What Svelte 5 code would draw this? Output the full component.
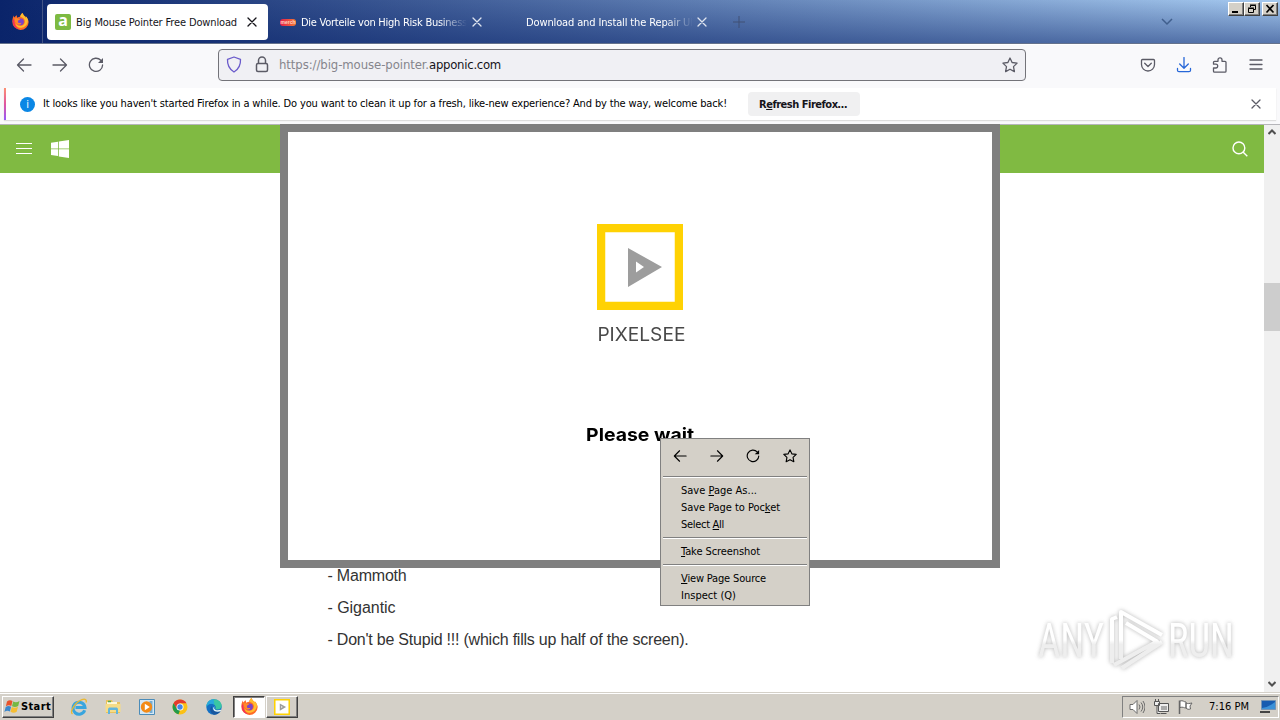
<script>
	const tabs = [
		{ title: 'Big Mouse Pointer Free Download', icon: 'apponic', width: 161, active: true },
		{ title: 'Die Vorteile von High Risk Business', icon: 'merch', width: 166 },
		{ title: 'Download and Install the Repair UI', icon: '', width: 167 }
	];

	const menuGroups = [
		[
			{ pre: 'Save ', key: 'P', post: 'age As...', width: 76 },
			{ pre: 'Save Page to Poc', key: 'k', post: 'et', width: 99 },
			{ pre: 'Select ', key: 'A', post: 'll', width: 43 }
		],
		[{ pre: '', key: 'T', post: 'ake Screenshot', width: 79 }],
		[
			{ pre: '', key: 'V', post: 'iew Page Source', width: 85 },
			{ pre: 'Inspect (Q)', key: '', post: '', width: 55 }
		]
	];

	const lines = [
		{ text: '- Mammoth', width: 79 },
		{ text: '- Gigantic', width: 68 },
		{ text: "- Don't be Stupid !!! (which fills up half of the screen).", width: 361 }
	];

	// spread the letters so the text takes up the given width
	function fit(node, width) {
		const natural = node.getBoundingClientRect().width;
		const count = node.textContent.length;
		node.style.letterSpacing = `${(width - natural) / count}px`;
	}

	// widen the letters themselves, for the splash lettering
	function stretch(node, width) {
		node.style.transform = `scaleX(${width / node.getBoundingClientRect().width})`;
	}
</script>

{#snippet firefox(size)}
	<svg width={size} height={size} viewBox="0 0 16 16">
		<path d="M15 6c-.5-1.400-1.500-2.500-2.200-3 .3.700.4 1.200.4 1.700C12 2.500 10.300 2 10 0 8.500.9 7.900 2.500 7.700 3.600 6.800 3.600 5.800 3.900 5 4.400 4.600 3.900 4.500 3 4.600 2 3.300 2.700 2.600 3.600 2.100 4.300 1.700 3.800 1.700 2.700 1.800 2.100 1 3.400.3 5.600.3 8a7.700 7.700 0 0 0 15.400.4C15.700 7.500 15.400 6.800 15 6z" fill="#ff6a25" />
		<path d="M15 6c-.5-1.400-1.500-2.500-2.200-3 .3.700.4 1.200.4 1.700C12 2.500 10.300 2 10 0 8.500.9 7.900 2.500 7.700 3.600c2 .3 3.900 1.400 4.300 3.500.6 3-1.500 5-4 5-2 0-4-1-4.800-2.800C3.500 13 7 14.500 9.800 13.600 13 12.800 15.300 10 15 6z" fill="#ffbd2e" />
		<circle cx="8" cy="8.300" r="3.200" fill="#7b42c9" />
		<path d="M2.300 5.300c1-1 2.800-.8 3.500 0 .7 0 1.500.1 2 .4-.4.900-1.500 1-2 1.400-.4.400 0 1-.3 1.500.9 1.100 2.300 1.100 3.400.5C8.600 11.300 5 11.500 3.600 9.200 2.800 8 2.300 6.500 2.300 5.300z" fill="#ff8928" />
		<path d="M1 6C.2 10 2 14.800 7.500 15.500 4.500 14.500 1.800 11 2.100 6z" fill="#f02b62" />
	</svg>
{/snippet}

{#snippet back()}
	<svg width="16" height="16" viewBox="0 0 16 16" class="line"><path d="M15 8H1.500M7.500 2 1.500 8l6 6" /></svg>
{/snippet}

{#snippet forward()}
	<svg width="16" height="16" viewBox="0 0 16 16" class="line"><path d="M1 8h13.500M8.500 2l6 6-6 6" /></svg>
{/snippet}

{#snippet reload()}
	<svg width="16" height="16" viewBox="0 0 16 16" class="line">
		<path d="M12.800 3.300A6.600 6.600 0 1 0 14.600 8" />
		<path d="M15 1v5h-5z" class="solid" />
	</svg>
{/snippet}

{#snippet star()}
	<svg width="16" height="16" viewBox="0 0 16 16" class="line">
		<path d="m8 1 2.100 4.500 5 .6-3.600 3.500.9 5L8 12.200l-4.400 2.400.9-5L.900 6.100l5-.6z" />
	</svg>
{/snippet}

{#snippet cross(size)}
	<svg width={size} height={size} viewBox="0 0 10 10" class="line"><path d="m1 1 8 8M9 1 1 9" /></svg>
{/snippet}

{#snippet pixelsee(size)}
	<svg width={size} height={size} viewBox="0 0 86 86">
		<path d="M4 4h78v78H4z" fill="#fff" stroke="#ffd203" stroke-width="8.500" />
		<path d="M31 24v39l34-20zM39 37.500l8 5.500-8 5.500z" fill="#9d9d9d" fill-rule="evenodd" />
	</svg>
{/snippet}

<div class="screen">
	<header class="tabbar">
		<div class="home">{@render firefox(17)}</div>
		{#each tabs as tab}
			<div class="tab" class:active={tab.active} class:plain={!tab.icon}>
				{#if tab.icon === 'apponic'}
					<span class="apponic">a</span>
				{:else if tab.icon === 'merch'}
					<span class="merch">merch</span>
				{/if}
				<span class="tab-title" style:width="{tab.width}px"><span use:fit={tab.width}>{tab.title}</span></span>
				<span class="tab-close">{@render cross(10)}</span>
			</div>
		{/each}
		<svg class="plus" width="12" height="12" viewBox="0 0 12 12"><path d="M6 0v12M0 6h12" /></svg>
		<svg class="all-tabs" width="12" height="8" viewBox="0 0 12 8"><path d="m1 1 5 5 5-5" /></svg>
		<div class="window-buttons">
			<span><svg width="12" height="10" viewBox="0 0 12 10"><path d="M2 8h6" stroke="#000" stroke-width="2" /></svg></span>
			<span>
				<svg width="12" height="10" viewBox="0 0 12 10" fill="none" stroke="#000">
					<path d="M4.500 3V1.500h5v4H8M4 1h6M2.500 4.500h5v4h-5zM2 4h6" />
				</svg>
			</span>
			<span class="close-window"><svg width="12" height="10" viewBox="0 0 12 10"><path d="m2.500 1 7 7.500M9.500 1l-7 7.500" stroke="#000" stroke-width="1.700" /></svg></span>
		</div>
	</header>

	<nav class="toolbar">
		<div class="nav-buttons">
			{@render back()}
			{@render forward()}
			{@render reload()}
		</div>
		<div class="urlbar">
			<svg width="16" height="17" viewBox="0 0 16 17" fill="none" stroke="#6a5acb" stroke-width="1.300">
				<path d="M8 1 14.500 3.300c.3 5.400-1.500 9.700-6.500 12.700C3 13 1.200 8.700 1.500 3.300z" stroke-linejoin="round" />
			</svg>
			<svg class="lock" width="14" height="17" viewBox="0 0 14 17" fill="none" stroke="#5b5b66" stroke-width="1.500">
				<rect x="1.500" y="7.500" width="11" height="8" rx="1.500" />
				<path d="M3.500 7.500V4.500a3.500 3.500 0 0 1 7 0v3" />
			</svg>
			<span class="url"><span use:fit={150}>https://big-mouse-pointer.</span><b use:fit={72}>apponic.com</b></span>
			<span class="bookmark">{@render star()}</span>
		</div>
		<div class="tools">
			<svg width="16" height="16" viewBox="0 0 16 16" class="line">
				<path d="M2.500 2.500h11c.7 0 1 .4 1 1v4a6.500 6.500 0 0 1-13 0v-4c0-.6.300-1 1-1zM4.700 6.300 8 9.500l3.300-3.200" />
			</svg>
			<svg width="16" height="16" viewBox="0 0 16 16" class="line download">
				<path d="M8 .5v10.500M3.700 7 8 11.200 12.300 7M1.500 11.500v1.700c0 1 .5 1.500 1.500 1.500h10c1 0 1.500-.5 1.500-1.500v-1.700" />
			</svg>
			<svg width="16" height="16" viewBox="0 0 16 16" class="line">
				<path d="M2.500 15.200c-.7 0-1-.3-1-1V11h2.300a1.900 1.900 0 0 0 0-3.800H1.500V5.300c0-.7.300-1 1-1H6V2.800a2 2 0 0 1 4 0v1.500h3c.7 0 1 .3 1 1v8.900c0 .7-.3 1-1 1z" />
			</svg>
			<svg width="16" height="16" viewBox="0 0 16 16" class="line"><path d="M2 3h12M2 7.500h12M2 12h12" /></svg>
		</div>
	</nav>

	<div class="notice-area">
		<div class="notice">
			<span class="info">i</span>
			<span class="notice-text" use:fit={684}>It looks like you haven't started Firefox in a while. Do you want to clean it up for a fresh, like-new experience? And by the way, welcome back!</span>
			<button><span use:fit={88}>R<u>e</u>fresh Firefox…</span></button>
			<span class="dismiss">{@render cross(10)}</span>
		</div>
	</div>

	<main class="viewport">
		<div class="page">
			<div class="site-header">
				<svg width="16" height="12" viewBox="0 0 16 12"><path d="M0 .5h16M0 5.500h16M0 10.500h16" stroke="#fff" /></svg>
				<svg width="18" height="18" viewBox="0 0 18 18" fill="#fff">
					<path d="M0 2.800 7 1.700v6.800H0zM7.800 1.500 18 0v8.500H7.800zM0 9.300h7v6.800l-7-1zM7.800 9.300H18V18L7.800 16.400z" />
				</svg>
				<svg class="search" width="16" height="16" viewBox="0 0 16 16" fill="none" stroke="#fff" stroke-width="1.400">
					<circle cx="6.900" cy="6.900" r="5.900" /><path d="m11 11 4.300 4.300" />
				</svg>
			</div>
			<article>
				{#each lines as line}
					<p><span use:fit={line.width}>{line.text}</span></p>
				{/each}
			</article>
		</div>
		<div class="scrollbar">
			<svg width="8" height="6" viewBox="0 0 8 6"><path d="m.5 5 3.500-3.500L7.500 5" /></svg>
			<div class="thumb"></div>
			<svg width="8" height="6" viewBox="0 0 8 6"><path d="m.5 1 3.500 3.500L7.500 1" /></svg>
		</div>
	</main>

	<footer class="taskbar">
		<div class="start">
			<svg width="17" height="15" viewBox="0 0 17 15">
				<path d="M3 2.500c2-1.500 3.700-1.500 5.500-.4L7.300 7C5.500 6 3.800 6.100 1.900 7.300z" fill="#e8532b" />
				<path d="M9.200 2.500c2 1.100 3.800 1 6.300-.5L14.200 7c-2.200 1.400-4.200 1.300-6.200.2z" fill="#75b843" />
				<path d="M1.700 8c2-1.300 3.600-1.200 5.400-.2l-1.200 4.700C4 11.500 2.400 11.500.400 12.900z" fill="#3b87cc" />
				<path d="M7.800 8c2 1.100 3.900 1.100 6.200-.2l-1.300 4.900c-2.100 1.300-4.100 1.200-6.200.1z" fill="#f6bd32" />
			</svg>
			<span use:fit={30}>Start</span>
		</div>
		<div class="launchers">
			<svg width="18" height="18" viewBox="0 0 18 18" fill="none">
				<path d="M14.700 12.200A6 6 0 1 1 15 9.500H5.500" stroke="#39a5de" stroke-width="3" />
				<path d="M2.500 16C-.500 14 5 4 12 1.600c3.500-1.200 5 .5 4 3" stroke="#eab830" stroke-width="1.300" />
			</svg>
			<svg width="18" height="18" viewBox="0 0 18 18">
				<path d="M2 2h6l1 2h7v11H2z" fill="#e9c35c" />
				<path d="M3 4h10v4H3z" fill="#fff8d8" /><path d="M1.500 6h15v8h-15z" fill="#f6dc87" />
				<path d="M4 16V11.500c0-1.500 1-2 2-2h6c1 0 2 .5 2 2V16h-2v-4H6v4z" fill="#62b5dc" />
				<path d="M4 3.500h3" stroke="#54a854" stroke-width="1.500" />
			</svg>
			<svg width="18" height="18" viewBox="0 0 18 18">
				<path d="M1.500 1.500h15v15h-15z" fill="#d4e7f5" stroke="#4b8cb9" />
				<path d="M11.500 3h3v12h-3z" fill="#73add5" />
				<circle cx="8.500" cy="9" r="5.700" fill="#f38a16" /><path d="m6.800 5.800 5 3.200-5 3.200z" fill="#fff" />
			</svg>
			<svg width="18" height="18" viewBox="0 0 18 18">
				<circle cx="9" cy="9" r="7.500" fill="#fbc116" />
				<path d="M2.500 5.300A7.500 7.500 0 0 1 15.500 5.300H9L5.800 11z" fill="#e33b2e" />
				<path d="M2.500 5.300 6 11l3 1.500-1.500 3.800A7.500 7.500 0 0 1 2.500 5.300z" fill="#229a4b" />
				<circle cx="9" cy="9" r="3.500" fill="#fff" /><circle cx="9" cy="9" r="2.700" fill="#4285e8" />
			</svg>
			<svg width="18" height="18" viewBox="0 0 18 18">
				<circle cx="9" cy="9" r="7.700" fill="#1470c4" />
				<path d="M1.300 9C1.600 4 5 1.300 9 1.300c4.500 0 7.700 3.200 7.700 6.500 0 2.400-1.900 3.700-4.200 3.700-2 0-2.500-.7-2-1.300C11.500 8 9 5.500 6 5.700 3.800 5.800 2 7 1.300 9z" fill="#39c6a3" />
				<path d="M1.300 9C1.600 4 5 1.300 9 1.300c-1 2.200 1 3.500 0 5C7.500 5.300 3 5 1.300 9z" fill="#28a8dd" />
				<path d="M7 8c-1 4 3 6.500 8.500 5-1.500 2.500-4 3.700-6.500 3.700C5 15.500 4 10 7 8z" fill="#17579f" />
				<path d="M9.700 8.500c-2 2.500 1.300 4.800 6 3.300l.5 1c-3 2-8 1-8-2.300 0-1 .8-1.800 1.500-2z" fill="#e8f4f4" />
			</svg>
		</div>
		<div class="task pressed">{@render firefox(17)}</div>
		<div class="task">{@render pixelsee(16)}</div>
		<div class="tray">
			<svg width="16" height="16" viewBox="0 0 16 16" fill="#fff" stroke="#6b6b6b">
				<path d="M1 5.500h3l4-4v13l-4-4H1z" /><path d="M10 5.500q2 2.500 0 5M12 3.500q3.500 4.500 0 9M14 2q4 6 0 12" fill="none" />
			</svg>
			<svg width="17" height="16" viewBox="0 0 17 16" fill="#eee" stroke="#555">
				<path d="M5.500 4.500h10v8h-10zM7.500 14.500h6M1.500 2.500h5v4h-5zM2.500 0v2M5.500 0v2M4 7v7.500h3" />
				<path d="M8 7h6v4H8z" fill="#aaa" stroke="none" />
			</svg>
			<svg width="17" height="16" viewBox="0 0 17 16" fill="#fff" stroke="#666">
				<path d="M2.500 15V1.500" stroke-width="1.500" /><path d="M3 2c3-1 4 1 6 1v6c-2 0-3-1.500-6-.5zM9 4c2 1 3 .5 6 0l-2 3 .5 3c-2 .5-3 .5-4.500-1z" />
			</svg>
			<span class="clock"><span use:fit={40}>7:16 PM</span></span>
			<svg width="16" height="15" viewBox="0 0 16 15">
				<path d="M1.500 1.500h14v9h-14z" fill="#175bb0" stroke="#7694b4" />
				<path d="M2 9q7-1 13-6v7H2z" fill="#3c91d8" /><path d="M0 13h10" stroke="#444" stroke-width="2" />
			</svg>
		</div>
	</footer>

	<div class="splash">
		{@render pixelsee(86)}
		<div class="brand"><span use:stretch={88}>PIXELSEE</span></div>
		<div class="wait"><span use:stretch={108}>Please wait</span></div>
	</div>

	<div class="menu">
		<div class="menu-nav">
			{@render back()}
			{@render forward()}
			{@render reload()}
			{@render star()}
		</div>
		{#each menuGroups as group}
			<hr />
			{#each group as item}
				<div class="item"><span use:fit={item.width}>{item.pre}<u>{item.key}</u>{item.post}</span></div>
			{/each}
		{/each}
	</div>

	<svg class="watermark" width="240" height="80" viewBox="0 0 240 80">
		<defs>
			<linearGradient id="shade" gradientUnits="userSpaceOnUse" x1="0" y1="0" x2="0" y2="70">
				<stop offset=".5" stop-color="#fff" />
				<stop offset=".56" stop-color="#ececec" />
			</linearGradient>
		</defs>
		<g font-family="Roboto, sans-serif" font-size="49" fill="url(#shade)">
			<text x="8" y="52" textLength="66" lengthAdjust="spacingAndGlyphs">ANY</text>
			<text x="138" y="52" textLength="66" lengthAdjust="spacingAndGlyphs">RUN</text>
		</g>
		<path class="play" d="M91 54V7l41 23M82 58V14l5-2M96 18l31 18.500L84 60M132 37 92 63" stroke="url(#shade)" />
	</svg>
</div>

<style>
	:global(body) {
		margin: 0;
		overflow: hidden;
	}

	.screen {
		position: relative;
		display: flex;
		flex-direction: column;
		width: 1280px;
		height: 720px;
		overflow: hidden;
		background: #fff;
		color: #000;
		font-family: 'DejaVu Sans Condensed', 'DejaVu Sans', sans-serif;
		font-stretch: condensed;
		font-size: 11px;
		white-space: nowrap;
	}

	svg {
		display: block;
		flex: none;
	}

	.line {
		fill: none;
		stroke: currentColor;
		stroke-width: 1.3;
		stroke-linejoin: round;
		stroke-linecap: round;
	}

	.solid {
		fill: currentColor;
		stroke: none;
	}

	.tabbar {
		display: flex;
		box-sizing: border-box;
		height: 44px;
		border-bottom: 1px solid #65728c;
		background: linear-gradient(180deg, transparent, rgba(10, 36, 106, 0.5)), linear-gradient(90deg, #0a246a, #a6caf0);
		color: #fff;
	}

	.home {
		display: flex;
		align-items: center;
		justify-content: center;
		width: 43px;
		padding: 0 2px 0 0;
		box-sizing: border-box;
		border-right: 1px solid #435586;
	}

	.home + .tab {
		margin-left: 4px;
	}

	.tab {
		display: flex;
		align-items: center;
		box-sizing: border-box;
		width: 221px;
		height: 36px;
		margin: 4px 4px 0 0;
		padding-left: 8px;
		border-radius: 4px;
	}

	.tab.active {
		background: #fff;
		color: #15141a;
	}

	.tab.plain {
		padding-left: 29px;
	}

	.apponic,
	.merch {
		width: 16px;
		height: 16px;
		margin-right: 5px;
		text-align: center;
	}

	.apponic {
		border-radius: 2px;
		background: #7dba42;
		color: #fff;
		font: bold 16px/13px 'Open Sans', sans-serif;
	}

	.merch {
		height: 7px;
		border-radius: 3px;
		background: linear-gradient(90deg, #e41b4d, #f47b32);
		color: #ffd4c4;
		font: bold 5px/7px 'Liberation Sans', sans-serif;
	}

	.tab-title {
		overflow: hidden;
		padding-top: 2px;
		line-height: 16px;
	}

	.tab:not(.active) .tab-title {
		mask-image: linear-gradient(90deg, #000 calc(100% - 28px), transparent);
	}

	.tab-close {
		margin-left: 10px;
	}

	.tab:not(.active) .tab-close {
		margin-left: 5px;
		color: #dfe5f0;
	}

	.tab.plain .tab-close {
		margin-left: 4px;
	}

	.plus {
		margin: 16px 0 0 11px;
		stroke: #405174;
	}

	.all-tabs {
		margin: 18px 0 0 auto;
		fill: none;
		stroke: #405f8d;
		stroke-width: 1.5;
	}

	.window-buttons {
		display: flex;
		margin: 2px 2px 0 55px;
	}

	.window-buttons span {
		display: flex;
		align-items: center;
		justify-content: center;
		box-sizing: border-box;
		width: 16px;
		height: 14px;
		border: 1px solid;
		border-color: #fff #404040 #404040 #fff;
		background: #d4d0c8;
		box-shadow: inset -1px -1px #808080;
	}

	.window-buttons .close-window {
		margin-left: 2px;
	}

	.toolbar {
		display: flex;
		align-items: center;
		box-sizing: border-box;
		height: 44px;
		padding: 0 16px;
		padding-bottom: 4px;
		border-top: 1px solid #fff;
		background: #f9f9fb;
		color: #5b5b66;
	}

	.nav-buttons,
	.tools {
		display: flex;
		gap: 20px;
	}

	.nav-buttons {
		width: 202px;
	}

	.urlbar {
		display: flex;
		align-items: center;
		box-sizing: border-box;
		width: 808px;
		height: 32px;
		padding: 0 7px;
		border: 1px solid #737379;
		border-radius: 4px;
		background: #f0f0f4;
	}

	.lock {
		margin: 0 10px 0 13px;
	}

	.url {
		color: #85858c;
		font-size: 13px;
		line-height: 20px;
	}

	.url b {
		color: #15141a;
		font-weight: normal;
	}

	.bookmark {
		margin-left: auto;
	}

	.tools {
		margin-left: auto;
	}

	.download {
		stroke: #2767d8;
	}

	.notice-area {
		box-sizing: border-box;
		height: 37px;
		padding: 0 4px 4px;
		border-bottom: 1px solid #b5b5b9;
		background: #f9f9fb;
	}

	.notice {
		display: flex;
		align-items: center;
		box-sizing: border-box;
		height: 32px;
		padding: 0 15px 0 14px;
		border-left: 2px solid;
		border-image: linear-gradient(#ff9470, #e0559f, #9059ff) 1;
		background: #fff;
		box-shadow: 0 1px 1px #ddd;
	}

	.info {
		width: 15px;
		height: 15px;
		margin-right: 8px;
		border-radius: 50%;
		background: #0b87e5;
		color: #fff;
		text-align: center;
		line-height: 15px;
	}

	.notice-text {
		margin-top: -2px;
	}

	button {
		width: 112px;
		height: 24px;
		margin-left: 21px;
		padding: 0 2px 0 0;
		border: 0;
		border-radius: 4px;
		background: #f0f0f1;
		color: #15141a;
		font: bold 11px 'DejaVu Sans Condensed', 'DejaVu Sans', sans-serif;
		font-stretch: condensed;
	}

	.dismiss {
		margin-left: auto;
		color: #5b5b66;
	}

	.viewport {
		display: flex;
		height: 567px;
	}

	.page {
		display: flex;
		flex-direction: column;
		width: 1264px;
	}

	.site-header {
		display: flex;
		align-items: center;
		gap: 19px;
		height: 48px;
		padding: 0 16px;
		background: #80ba42;
	}

	.search {
		margin-left: auto;
	}

	article {
		display: flex;
		flex: 1;
		flex-direction: column;
		justify-content: flex-end;
		padding: 0 0 36px 327.500px;
		color: #333;
		font: 16px/32px 'Liberation Sans', sans-serif;
	}

	p {
		margin: 0;
	}

	.scrollbar {
		display: flex;
		flex-direction: column;
		align-items: center;
		box-sizing: border-box;
		width: 16px;
		padding: 4px 0 5px;
		background: #f0f0f0;
		fill: none;
		stroke: #505050;
		stroke-width: 2;
	}

	.thumb {
		width: 16px;
		height: 48px;
		margin: 148px 0 auto;
		background: #cdcdcd;
	}

	.taskbar {
		display: flex;
		align-items: center;
		box-sizing: border-box;
		height: 28px;
		padding: 2px 1px 2px 2px;
		border-top: 1px solid #d4d0c8;
		background: #d4d0c8;
		box-shadow: inset 0 1px #fff;
	}

	.start,
	.task {
		display: flex;
		align-items: center;
		box-sizing: border-box;
		height: 22px;
		border: 1px solid;
		border-color: #fff #404040 #404040 #fff;
		box-shadow: inset -1px -1px #808080;
	}

	.start {
		width: 52px;
		padding-left: 1px;
		font-weight: bold;
	}

	.launchers {
		display: flex;
		gap: 15.8px;
		margin-left: 16px;
		width: 162px;
	}

	.task {
		justify-content: center;
		width: 32px;
		margin-left: 1px;
	}

	.pressed {
		border-color: #404040 #fff #fff #404040;
		background: #fff;
		box-shadow: inset 1px 1px #808080;
	}

	.tray {
		display: flex;
		align-items: center;
		gap: 8px;
		box-sizing: border-box;
		width: 157px;
		height: 22px;
		margin-left: auto;
		padding-left: 6px;
		border: 1px solid;
		border-color: #808080 #fff #fff #808080;
	}

	.tray svg + svg {
		margin-left: -0.500px;
	}

	.clock {
		width: 43px;
		margin-left: 7px;
	}

	.splash {
		position: absolute;
		top: 124px;
		left: 280px;
		display: flex;
		flex-direction: column;
		align-items: center;
		box-sizing: border-box;
		width: 720px;
		height: 444px;
		padding-top: 92px;
		border: 8px solid #7f7f7f;
		background: #fff;
		font-family: Inter, sans-serif;
		font-size: 18px;
		line-height: 24px;
	}

	.splash span {
		display: inline-block;
	}

	.brand {
		margin: 13px 0 0 2px;
		color: #484848;
		font-weight: 400;
	}

	.wait {
		margin-top: 76px;
		font-weight: 700;
	}

	.menu {
		position: absolute;
		top: 438px;
		left: 660px;
		box-sizing: border-box;
		width: 150px;
		height: 168px;
		padding: 1px;
		border: 1px solid #808080;
		background: #d4d0c8;
	}

	.menu-nav {
		display: flex;
		justify-content: space-between;
		height: 27px;
		padding: 9px 11px 0;
	}

	.menu-nav svg {
		width: 14px;
		height: 14px;
	}

	hr {
		height: 0;
		margin: 0 1px 4px;
		border: 0;
		border-top: 1px solid #808080;
		border-bottom: 1px solid #fff;
	}

	.item + hr {
		margin-top: 4px;
	}

	.item {
		height: 17px;
		padding-left: 19px;
		line-height: 17px;
	}

	.watermark {
		position: absolute;
		top: 605px;
		left: 1030px;
		filter: drop-shadow(0 0 2px #aaa);
		opacity: 0.85;
	}

	.play {
		fill: none;
		stroke-width: 4;
		stroke-linejoin: round;
	}
</style>
